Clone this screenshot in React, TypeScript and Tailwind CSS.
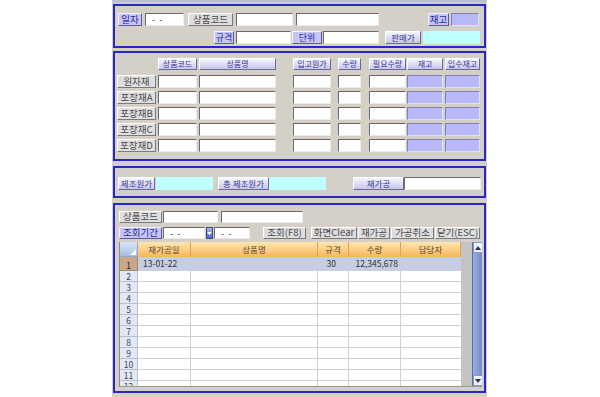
import React from "react";

const FONT = { fontFamily: '"Noto Sans CJK KR", "Noto Sans", sans-serif' };

const gray =
  "bg-[#dedede] text-[#4a4a4a] border border-t-white border-l-white border-r-[#7a7a7a] border-b-[#7a7a7a]";
const purple =
  "bg-[#c6c6f4] text-[#2626a0] border border-t-[#f2f2ff] border-l-[#f2f2ff] border-r-[#5a5a9a] border-b-[#5a5a9a]";
const lav =
  "bg-gradient-to-b from-[#f6f6ff] to-[#c6c6ec] text-[#383890] border border-t-white border-l-white border-r-[#6a6a9a] border-b-[#6a6a9a]";
const inputCls =
  "bg-white border border-t-[#6a6a6a] border-l-[#6a6a6a] border-r-[#ececec] border-b-[#ececec]";
const purpleBox =
  "bg-[#b8b8f8] border border-t-[#8080b0] border-l-[#8080b0] border-r-[#e0e0ff] border-b-[#e0e0ff]";
const cyanBox = "bg-[#c0ffff]";

function Btn({ className, children }: { className: string; children?: React.ReactNode }) {
  return (
    <div className={`flex items-center justify-center leading-none whitespace-nowrap shrink-0 ${className}`}>
      {children}
    </div>
  );
}

function Box({ className, children }: { className: string; children?: React.ReactNode }) {
  return (
    <div className={`flex items-center leading-none whitespace-nowrap shrink-0 ${className}`}>{children}</div>
  );
}

const cols = [
  { ml: "ml-[2px]", w: "w-[39px]" },
  { ml: "ml-[2px]", w: "w-[39px]" },
  { ml: "ml-[2px]", w: "w-[77px]" },
  { ml: "ml-[17px]", w: "w-[38px]" },
  { ml: "ml-[7px]", w: "w-[23px]" },
  { ml: "ml-[8px]", w: "w-[37px]" },
  { ml: "ml-[1px]", w: "w-[36px]" },
  { ml: "ml-[2px]", w: "w-[35px]" },
];
const heads = ["", "상품코드", "상품명", "입고원가", "수량", "필요수량", "재고", "입수재고"];
const rowLabels = ["원자재", "포장재A", "포장재B", "포장재C", "포장재D"];

const gridCols = [
  { w: "w-[18px]" },
  { w: "w-[53px]" },
  { w: "w-[127px]" },
  { w: "w-[31px]" },
  { w: "w-[52px]" },
  { w: "w-[60px]" },
];
const gridHeads = ["", "재가공일", "상품명", "규격", "수량", "담당자"];

export default function App() {
  const rows = Array.from({ length: 12 }, (_, i) => i + 1);
  return (
    <div className="w-[600px] h-[397px] bg-white flex overflow-hidden" style={FONT}>
      <div className="ml-[112px] w-[375px] h-[397px] bg-[#d4d0c8] flex flex-col">
        <div className="h-[4px] bg-gradient-to-b from-[#b4bccc] to-[#d4d0c8]" />
        {/* Panel 1 */}
        <div className="ml-[1px] w-[373px] h-[44px] border-2 border-[#2828c4] flex flex-col pt-[7px]">
          <div className="flex h-[13px]">
            <Btn className={`ml-[3px] w-[24px] text-[9.5px] ${purple}`}>일자</Btn>
            <Box className={`ml-[3px] w-[39px] text-[9px] text-[#333] pl-[6px] ${inputCls}`}>-&nbsp;&nbsp;-</Box>
            <Btn className={`ml-[4px] w-[45px] text-[9.5px] ${gray}`}>상품코드</Btn>
            <Box className={`ml-[3px] w-[57px] ${inputCls}`} />
            <Box className={`ml-[3px] w-[83px] ${inputCls}`} />
            <Btn className={`ml-[49px] w-[21px] text-[9.5px] ${purple}`}>재고</Btn>
            <Box className={`ml-[2px] w-[28px] ${purpleBox}`} />
          </div>
          <div className="flex h-[13px] mt-[5px]">
            <Btn className={`ml-[99px] w-[20px] text-[9px] ${purple}`}>규격</Btn>
            <Box className={`ml-[2px] w-[55px] ${inputCls}`} />
            <Btn className={`ml-[1px] w-[30px] text-[9px] ${purple}`}>단위</Btn>
            <Box className={`ml-[1px] w-[56px] ${inputCls}`} />
            <Btn className={`ml-[6px] w-[36px] text-[8.5px] ${lav}`}>판매가</Btn>
            <Box className={`ml-[2px] w-[57px] ${cyanBox}`} />
          </div>
        </div>

        {/* Panel 2 */}
        <div className="mt-[3px] ml-[1px] w-[373px] h-[110px] border-2 border-[#2828c4] flex flex-col pt-[5px]">
          <div className="flex h-[12px]">
            {heads.map((h, i) =>
              i === 0 ? (
                <div key={i} className={`shrink-0 ${cols[i].ml} ${cols[i].w}`} />
              ) : (
                <Btn key={i} className={`${cols[i].ml} ${cols[i].w} text-[8px] ${lav}`}>
                  {h}
                </Btn>
              )
            )}
          </div>
          <div className="flex flex-col gap-[3px] mt-[5px]">
            {rowLabels.map((lab) => (
              <div key={lab} className="flex h-[13px]">
                <Btn className={`${cols[0].ml} ${cols[0].w} text-[9.5px] ${gray}`}>{lab}</Btn>
                {cols.slice(1).map((c, j) => (
                  <Box key={j} className={`${c.ml} ${c.w} ${j >= 5 ? purpleBox : inputCls}`} />
                ))}
              </div>
            ))}
          </div>
        </div>

        {/* Panel 3 */}
        <div className="mt-[5px] ml-[1px] w-[373px] h-[32px] border-2 border-[#2828c4] flex pt-[9px]">
          <div className="flex h-[13px]">
            <Btn className={`ml-[3px] w-[37px] text-[8.5px] ${lav}`}>제조원가</Btn>
            <Box className={`ml-[1px] w-[57px] ${cyanBox}`} />
            <Btn className={`ml-[5px] w-[51px] text-[8.5px] ${lav}`}>총&nbsp;제조원가</Btn>
            <Box className={`w-[57px] ${cyanBox}`} />
            <Btn className={`ml-[27px] w-[51px] text-[8.5px] ${lav}`}>재가공</Btn>
            <Box className={`w-[77px] ${inputCls}`} />
          </div>
        </div>

        {/* Panel 4 */}
        <div className="mt-[5px] ml-[1px] w-[373px] h-[190px] border-2 border-[#2828c4] flex flex-col pt-[6px]">
          <div className="flex h-[12px]">
            <Btn className={`ml-[4px] w-[43px] text-[9.5px] ${gray}`}>상품코드</Btn>
            <Box className={`ml-[1px] w-[55px] ${inputCls}`} />
            <Box className={`ml-[3px] w-[82px] ${inputCls}`} />
          </div>
          <div className="flex h-[12px] mt-[4px]">
            <Btn className={`ml-[4px] w-[43px] text-[9.5px] ${purple}`}>조회기간</Btn>
            <Box className={`ml-[1px] w-[42px] text-[9px] text-[#333] pl-[6px] ${inputCls}`}>-&nbsp;&nbsp;-</Box>
            <div className="ml-[1px] w-[7px] h-[12px] shrink-0 bg-gradient-to-b from-[#a8b8f0] to-[#5068c0] border border-[#404880] flex items-center justify-center">
              <svg width="5" height="3" viewBox="0 0 5 3">
                <path d="M0 0 L5 0 L2.5 3 Z" fill="#fff" />
              </svg>
            </div>
            <Box className={`ml-[1px] w-[36px] text-[9px] text-[#333] pl-[6px] ${inputCls}`}>-&nbsp;&nbsp;-</Box>
            <Btn className={`ml-[13px] w-[43px] text-[9.5px] ${gray}`}>조회(F8)</Btn>
            <Btn className={`ml-[5px] w-[46px] text-[9.5px] ${gray}`}>화면Clear</Btn>
            <Btn className={`ml-[1px] w-[32px] text-[9.5px] ${gray}`}>재가공</Btn>
            <Btn className={`ml-[1px] w-[43px] text-[9.5px] ${gray}`}>가공취소</Btn>
            <Btn className={`ml-[1px] w-[45px] text-[9.5px] ${gray}`}>닫기(ESC)</Btn>
          </div>

          {/* Grid */}
          <div className="mt-[3px] ml-[4px] w-[363px] h-[145px] flex border-l border-[#8a8a8a] border-b border-b-[#9a9a9a] overflow-hidden">
            <div className="flex flex-col w-[341px] bg-white">
              <div className="flex h-[15px] shrink-0">
                {gridHeads.map((h, i) =>
                  i === 0 ? (
                    <div
                      key={i}
                      className={`${gridCols[i].w} shrink-0 bg-gradient-to-b from-[#dce6f8] to-[#a8bce0] border-r border-b border-[#9aa8c8] relative`}
                    >
                      <svg className="absolute right-[1px] bottom-[1px]" width="6" height="6" viewBox="0 0 6 6">
                        <path d="M6 0 L6 6 L0 6 Z" fill="#ffffff" />
                      </svg>
                    </div>
                  ) : (
                    <div
                      key={i}
                      className={`${gridCols[i].w} shrink-0 flex items-center justify-center text-[8.5px] leading-none text-[#5a4630] bg-gradient-to-b from-[#ffe6b0] to-[#f6b658] border-r border-[#e2a050]`}
                    >
                      {h}
                    </div>
                  )
                )}
              </div>
              {rows.map((r) => {
                const first = r === 1;
                return (
                  <div key={r} className={`flex shrink-0 ${first ? "h-[14px]" : "h-[11px]"}`}>
                    <div
                      className={`${gridCols[0].w} shrink-0 flex items-end justify-center text-[8.5px] leading-none pb-[1px] border-r border-b ${
                        first
                          ? "bg-[#c8a888] text-[#302010] border-[#a08868]"
                          : "bg-[#e2e8f4] text-[#404060] border-[#b8c0d0]"
                      }`}
                    >
                      {r}
                    </div>
                    <div
                      className={`${gridCols[1].w} shrink-0 flex items-center pl-[5px] text-[8.5px] leading-none text-[#303040] border-r border-b ${
                        first ? "bg-[#c6cee2] border-[#c6cee2]" : "border-[#d0d0d0]"
                      }`}
                    >
                      {first ? "13-01-22" : ""}
                    </div>
                    <div
                      className={`${gridCols[2].w} shrink-0 border-r border-b ${
                        first ? "bg-[#c6cee2] border-[#c6cee2]" : "border-[#d0d0d0]"
                      }`}
                    />
                    <div
                      className={`${gridCols[3].w} shrink-0 flex items-center justify-end pr-[12px] text-[8.5px] leading-none text-[#303040] border-r border-b ${
                        first ? "bg-[#c6cee2] border-[#c6cee2]" : "border-[#d0d0d0]"
                      }`}
                    >
                      {first ? "30" : ""}
                    </div>
                    <div
                      className={`${gridCols[4].w} shrink-0 flex items-center justify-end pr-[2px] text-[8.5px] leading-none text-[#303040] border-r border-b ${
                        first ? "bg-[#c6cee2] border-[#c6cee2]" : "border-[#d0d0d0]"
                      }`}
                    >
                      {first ? "12,345,678" : ""}
                    </div>
                    <div
                      className={`${gridCols[5].w} shrink-0 border-b ${
                        first ? "bg-[#c6cee2] border-[#c6cee2]" : "border-[#d0d0d0]"
                      }`}
                    />
                  </div>
                );
              })}
            </div>
            <div className="w-[11px] shrink-0 bg-[#c4c4c4]" />
            <div className="w-[11px] shrink-0 flex flex-col bg-gradient-to-r from-[#9cb0dc] to-[#6e88c0] border-l border-[#5870a8]">
              <div className="h-[11px] flex items-center justify-center bg-[#eef2fc] border border-[#8898c0]">
                <svg width="6" height="4" viewBox="0 0 6 4">
                  <path d="M0 4 L6 4 L3 0 Z" fill="#303050" />
                </svg>
              </div>
              <div className="flex-1" />
              <div className="h-[11px] flex items-center justify-center bg-[#eef2fc] border border-[#8898c0]">
                <svg width="6" height="4" viewBox="0 0 6 4">
                  <path d="M0 0 L6 0 L3 4 Z" fill="#303050" />
                </svg>
              </div>
            </div>
          </div>
        </div>
      </div>
    </div>
  );
}
